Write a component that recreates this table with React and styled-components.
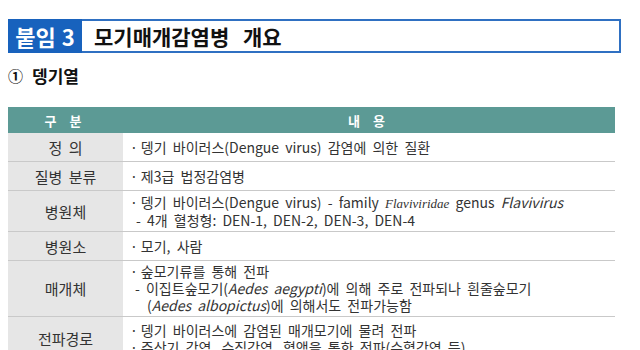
import styled, { createGlobalStyle } from 'styled-components'

const Global = createGlobalStyle`
body {
  margin: 0;
  background: #fff;
  font-family: "Noto Sans CJK KR", "Noto Sans", sans-serif;
  color: #222;
}
`

const Page = styled.div`
width: 640px;
height: 350px;
overflow: hidden;
padding: 19px 0 0 8px;
box-sizing: border-box;
`

const TitleBox = styled.div`
display: flex;
align-items: stretch;
width: 613px;
height: 34px;
box-sizing: border-box;
border: 2px solid #2f70c2;
`

const Tag = styled.div`
width: 74px;
margin: -2px 0 -2px -2px;
background: #1862bd;
color: #fff;
font-size: 22px;
font-weight: 700;
word-spacing: 1px;
display: flex;
align-items: center;
justify-content: center;
`

const Heading = styled.h1`
margin: 0 0 0 12px;
font-size: 21px;
font-weight: 700;
word-spacing: 9px;
color: #111;
display: flex;
align-items: center;
`

const Section = styled.h2`
margin: 12px 0 0 0;
font-size: 17px;
line-height: 22px;
font-weight: 700;
color: #111;
display: flex;
align-items: center;
gap: 9px;
`

const Circle = styled.span`
font-size: 15px;
`

const Table = styled.div`
margin-top: 20px;
width: 607px;
display: grid;
grid-template-columns: 115px 1fr;
font-size: 14px;
`

const HeadCell = styled.div`
background: #5c9a95;
color: #fff;
font-weight: 700;
font-size: 13px;
letter-spacing: 5px;
height: 26px;
display: flex;
align-items: center;
justify-content: center;
`

const Label = styled.div`
background: #e6e6e6;
border-bottom: 1px solid #c9c9c9;
height: ${p => p.h}px;
box-sizing: border-box;
display: flex;
align-items: center;
justify-content: center;
color: #333;
font-size: 15px;
word-spacing: 3px;
`

const Content = styled.div`
border-bottom: 1px solid #c9c9c9;
height: ${p => p.h}px;
box-sizing: border-box;
padding: 0 0 0 7px;
display: flex;
flex-direction: column;
justify-content: center;
line-height: 17px;
color: #333;
word-spacing: 3px;
`

const Line = styled.div`
white-space: nowrap;
padding-left: ${p => p.indent || 0}px;
`

const Dot = styled.span`
margin-right: 3px;
`

const Sci = styled.i`
font-family: "Liberation Serif", serif;
font-size: 13px;
word-spacing: 0;
`

const rows = [
  { label: '정 의', h: 29, lines: [[<Dot key="d">·</Dot>, '뎅기 바이러스(Dengue virus) 감염에 의한 질환']] },
  { label: '질병 분류', h: 29, lines: [[<Dot key="d">·</Dot>, '제3급 법정감염병']] },
  {
    label: '병원체', h: 41, lines: [
      [<Dot key="d">·</Dot>, '뎅기 바이러스(Dengue virus) - family ', <Sci key="a">Flaviviridae</Sci>, ' genus ', <i key="b">Flavivirus</i>],
      ['- 4개 혈청형: DEN-1, DEN-2, DEN-3, DEN-4', 6],
    ],
  },
  { label: '병원소', h: 29, lines: [[<Dot key="d">·</Dot>, '모기, 사람']] },
  {
    label: '매개체', h: 56, lines: [
      [<Dot key="d">·</Dot>, '숲모기류를 통해 전파'],
      ['- 이집트숲모기(', <i key="c">Aedes aegypti</i>, ')에 의해 주로 전파되나 흰줄숲모기', 5],
      ['(', <i key="d">Aedes albopictus</i>, ')에 의해서도 전파가능함', 17],
    ],
  },
  {
    label: '전파경로', h: 44, lines: [
      [<Dot key="d">·</Dot>, '뎅기 바이러스에 감염된 매개모기에 물려 전파'],
      [<Dot key="d">·</Dot>, '주산기 감염, 수직감염, 혈액을 통한 전파(수혈감염 등)'],
    ],
  },
]

export default function App() {
  return (
    <Page>
      <Global />
      <TitleBox>
        <Tag>붙임 3</Tag>
        <Heading>모기매개감염병 개요</Heading>
      </TitleBox>
      <Section>
        <Circle>①</Circle>뎅기열
      </Section>
      <Table>
        <HeadCell>구 분</HeadCell>
        <HeadCell>내 용</HeadCell>
        {rows.map(r => (
          <>
            <Label h={r.h}>{r.label}</Label>
            <Content h={r.h}>
              {r.lines.map((l, i) => {
                const indent = typeof l[l.length - 1] === 'number' ? l[l.length - 1] : 0
                const parts = indent ? l.slice(0, -1) : l
                return <Line key={i} indent={indent}>{parts}</Line>
              })}
            </Content>
          </>
        ))}
      </Table>
    </Page>
  )
}
